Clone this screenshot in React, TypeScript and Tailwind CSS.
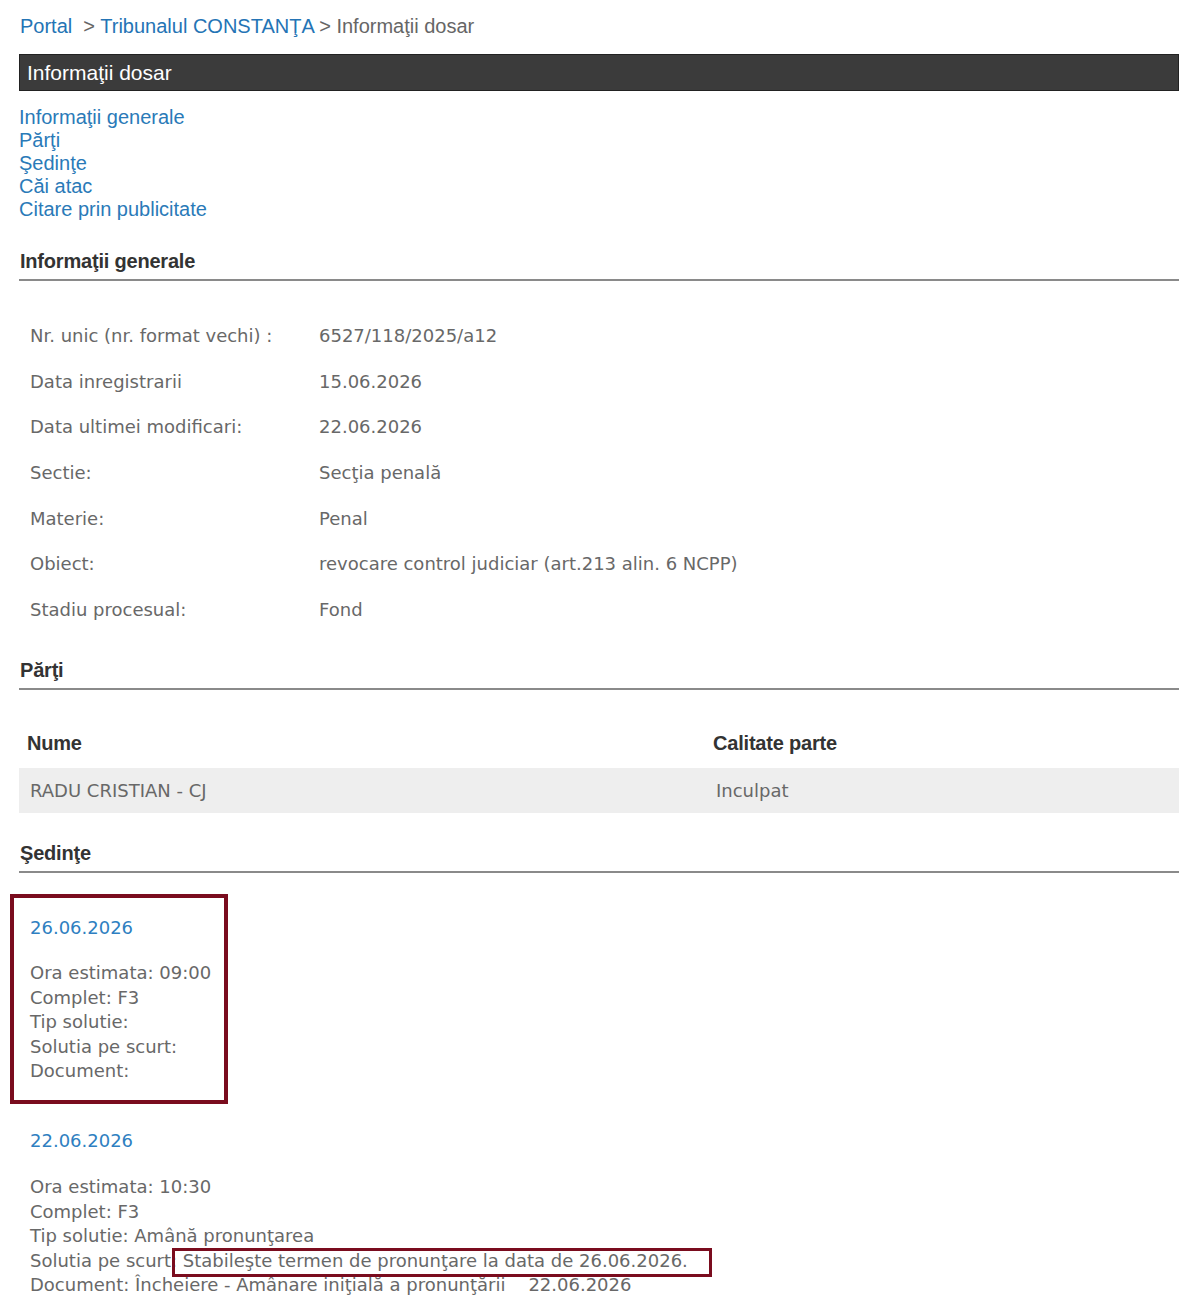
import React from "react";

const arial = { fontFamily: '"Liberation Sans", Arial, sans-serif' };
const tah = { fontFamily: '"DejaVu Sans", Verdana, sans-serif' };

function Heading({ children }: { children: React.ReactNode }) {
  return (
    <div className="ml-[19px] mr-[21px] border-b-2 border-[#8a8a8a] pb-[5px]">
      <div className="text-[20px] font-bold text-[#333] leading-[25px] pl-[1px] tracking-[-0.2px]" style={arial}>
        {children}
      </div>
    </div>
  );
}

const info: [string, string][] = [
  ["Nr. unic (nr. format vechi) :", "6527/118/2025/a12"],
  ["Data inregistrarii", "15.06.2026"],
  ["Data ultimei modificari:", "22.06.2026"],
  ["Sectie:", "Secţia penală"],
  ["Materie:", "Penal"],
  ["Obiect:", "revocare control judiciar (art.213 alin. 6 NCPP)"],
  ["Stadiu procesual:", "Fond"],
];

export default function App() {
  return (
    <div className="bg-white w-[1200px] h-[1306px] overflow-hidden text-[#686868]">
      <div className="pt-[13px] pl-[20px] text-[20px] leading-[26px]" style={arial}>
        <span className="text-[#2474b5]">Portal</span>
        <span className="text-[#666]">&nbsp; &gt; </span>
        <span className="text-[#2474b5]">Tribunalul CONSTANŢA</span>
        <span className="text-[#666]"> &gt; Informaţii dosar</span>
      </div>
      <div className="ml-[19px] mr-[21px] mt-[15px] h-[37px] bg-[#3b3b3b] border border-[#222] flex items-center pl-[7px]">
        <span className="text-white text-[21px]" style={arial}>Informaţii dosar</span>
      </div>
      <div className="pl-[19px] pt-[15px] flex flex-col text-[20px] leading-[23px] text-[#2a7ab8]" style={arial}>
        <span>Informaţii generale</span>
        <span>Părţi</span>
        <span>Şedinţe</span>
        <span>Căi atac</span>
        <span>Citare prin publicitate</span>
      </div>
      <div className="mt-[28px]">
        <Heading>Informaţii generale</Heading>
      </div>
      <div className="pt-[41px] pl-[30px] text-[18px]" style={tah}>
        {info.map(([k, v]) => (
          <div key={k} className="flex h-[45.7px] items-start">
            <div className="w-[289px]">{k}</div>
            <div>{v}</div>
          </div>
        ))}
      </div>
      <div className="mt-[16px]">
        <Heading>Părţi</Heading>
      </div>
      <div className="ml-[19px] mr-[21px] mt-[28px]">
        <div className="flex h-[50px] items-center text-[20px] font-bold text-[#333] tracking-[-0.2px]" style={arial}>
          <div className="w-[694px] pl-[8px]">Nume</div>
          <div>Calitate parte</div>
        </div>
        <div className="flex h-[45px] items-center bg-[#eeeeee] text-[18px]" style={tah}>
          <div className="w-[697px] pl-[11px]">RADU CRISTIAN - CJ</div>
          <div>Inculpat</div>
        </div>
      </div>
      <div className="mt-[28px]">
        <Heading>Şedinţe</Heading>
      </div>
      <div className="pl-[10px] pt-[21px] text-[18px]" style={tah}>
        <div className="w-[218px] h-[210px] border-[4px] border-[#7a0c1e] pl-[16px] pt-[18px] leading-[24.5px]">
          <div className="text-[#2f7fc1]">26.06.2026</div>
          <div className="mt-[21px]">Ora estimata: 09:00</div>
          <div>Complet: F3</div>
          <div>Tip solutie:</div>
          <div>Solutia pe scurt:</div>
          <div>Document:</div>
        </div>
        <div className="pl-[20px] pt-[25px] leading-[24.5px]">
          <div className="text-[#2f7fc1]">22.06.2026</div>
          <div className="mt-[22px]">Ora estimata: 10:30</div>
          <div>Complet: F3</div>
          <div>Tip solutie: Amână pronunţarea</div>
          <div className="relative">
            Solutia pe scurt: Stabileşte termen de pronunţare la data de 26.06.2026.
            <span className="absolute left-[142px] top-[-1px] w-[540px] h-[29px] border-[3px] border-[#7a0c1e]" />
          </div>
          <div>Document: Încheiere - Amânare iniţială a pronunţării &nbsp;&nbsp; 22.06.2026</div>
        </div>
      </div>
    </div>
  );
}
